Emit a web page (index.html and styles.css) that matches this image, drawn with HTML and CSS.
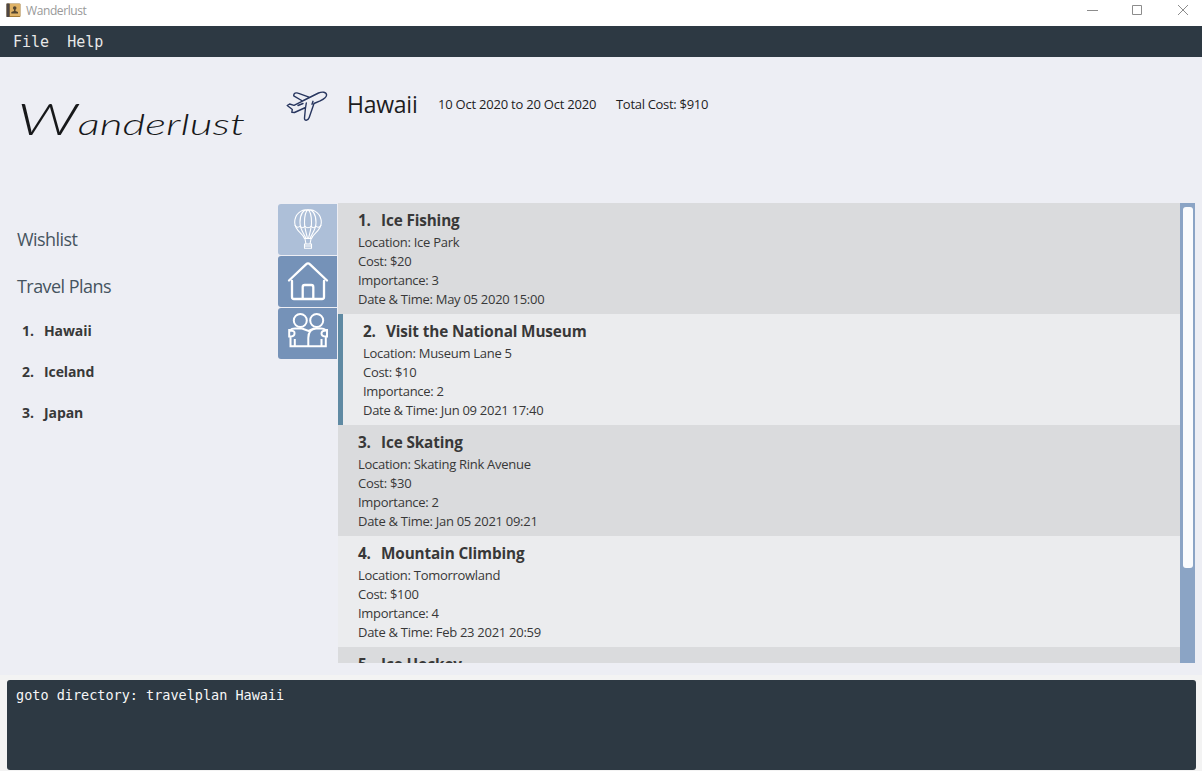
FILE: index.html
```html
<!DOCTYPE html>
<html lang="en">
<head>
<meta charset="utf-8">
<title>Wanderlust</title>
<link rel="stylesheet" href="styles.css">
</head>
<body>
<header class="titlebar">
  <svg class="app-icon" width="15" height="15" viewBox="0 0 15 15">
    <rect x="0.5" y="0.5" width="14" height="13.5" rx="1" fill="#a37a35"/>
    <rect x="4" y="1" width="10" height="12" fill="#dfb265"/>
    <rect x="0.5" y="0.5" width="3" height="13.5" fill="#4d4645"/>
    <circle cx="8.7" cy="5" r="1.8" fill="#54452f"/>
    <path d="M8 6h1.5v2l2.5 1v1.6H5.300V9L8 8z" fill="#54452f"/>
  </svg>
  <span class="app-title">Wanderlust</span>
  <svg class="window-controls" width="104" height="12" viewBox="0 0 104 12" fill="none" stroke="#8c8c8c">
    <path d="M0 6.500h11M45.500 1.500h9v9h-9zM91 1l10 10M101 1L91 11"/>
  </svg>
</header>
<nav class="menubar"><span>File</span><span>Help</span></nav>
<div class="workspace">
  <aside class="sidebar">
    <svg class="wordmark" width="240" height="60" viewBox="0 0 240 60">
      <text class="wordmark-text" x="5" y="43" textLength="228" lengthAdjust="spacingAndGlyphs"><tspan class="initial">W</tspan>anderlust</text>
    </svg>
    <h2 class="side-heading wish">Wishlist</h2>
    <h2 class="side-heading plans">Travel Plans</h2>
    <ol class="plan-list">
      <li><span class="num">1.</span><span>Hawaii</span></li>
      <li><span class="num">2.</span><span>Iceland</span></li>
      <li><span class="num">3.</span><span>Japan</span></li>
    </ol>
  </aside>
  <main class="content">
    <div class="plan-header">
      <svg class="plane" width="42" height="32" viewBox="0 0 42 32" fill="none" stroke="#28365f" stroke-width="1.400" stroke-linejoin="round" stroke-linecap="round">
        <path d="M17.500 9.500L32.500 2C36 .5 40.500 .8 40.600 4C40.500 7 37 8.500 33.500 10.200L28 12.500L23.200 26.500C22 30 18.200 30 18.500 27L19.500 16.500L8.500 21.500L5.800 21.300L6.300 18.500L4.800 17.300L1.200 14.500L3.600 13L8 14.300L17 9.800M16.500 10L7.700 4.800C7.500 2 10 1.400 12 2.200L23 6.200M12 14.500L17 12.500M19.500 17L20.300 12M26 13.300L27 10.300"/>
      </svg>
      <h1 class="plan-name">Hawaii</h1>
      <span class="dates">10 Oct 2020 to 20 Oct 2020</span>
      <span class="total">Total Cost: $910</span>
    </div>
    <div class="board">
      <div class="tabs">
        <div class="tab active">
          <svg width="59" height="51" viewBox="0 0 59 51" fill="none" stroke="#fff" stroke-width="1.100" stroke-linejoin="round">
            <path d="M26.500 34.500C25 29 16.700 27 16.700 18.500C16.700 10 23 5.500 30 5.500S43.300 10 43.300 18.500C43.300 27 35 29 33.500 34.500zM28 34.500C26 29 22 26 22 18.500C22 11 25 6 30 5.500C35 6 38 11 38 18.500C38 26 34 29 32 34.500M29.500 34.500C28 28 26.500 24 26.500 18.500C26.500 12 28 7 30 5.500C32 7 33.500 12 33.500 18.500C33.500 24 32 28 30.500 34.500"/>
            <path d="M16.800 21Q19.500 25 22.200 22Q24.500 25.500 26.800 22Q30 25.500 33.200 22Q35.500 25.500 37.800 22Q40.500 25 43.200 21"/>
            <path d="M27 35L28 40M33 35L32 40M26.500 40h7v4.300h-7zM26.500 42h7"/>
          </svg>
        </div>
        <div class="tab">
          <svg width="59" height="51" viewBox="0 0 59 51" fill="none" stroke="#fff" stroke-width="2.300" stroke-linejoin="round" stroke-linecap="round">
            <path d="M14 25V41Q14 43 16 43H44Q46 43 46 41V25M11 24.500L28 8.300Q30 6.500 32 8.300L49 24.500M24.700 43V31Q24.700 29 26.700 29H33.300Q35.300 29 35.300 31V43"/>
          </svg>
        </div>
        <div class="tab">
          <svg width="59" height="51" viewBox="0 0 59 51" fill="none" stroke="#fff" stroke-width="2" stroke-linejoin="miter">
            <circle cx="22.300" cy="12.500" r="6.500"/><circle cx="38.700" cy="12.500" r="6.500"/>
            <path d="M24 20.500H17Q13.500 20.500 12.500 22H11.200V28.500H12.500V38.200H47.800V28.500H49V22H47.500Q46 20.500 43 20.500H38Q30.500 21 30.300 30V38M24 20.500L30.500 23L36 20.500M12 22.500Q17 22.500 16.500 25.500Q16.500 28.500 12 28.500M48 22.500Q43.500 22.500 43.500 25.500Q43.500 28.500 48 28.500M16.800 31V38M43.500 31V38"/>
          </svg>
        </div>
      </div>
      <div class="activities">
        <article class="card"><h3><span class="num">1.</span>Ice Fishing</h3><p>Location: Ice Park</p><p>Cost: $20</p><p>Importance: 3</p><p>Date &amp; Time: May 05 2020 15:00</p></article>
        <article class="card selected"><h3><span class="num">2.</span>Visit the National Museum</h3><p>Location: Museum Lane 5</p><p>Cost: $10</p><p>Importance: 2</p><p>Date &amp; Time: Jun 09 2021 17:40</p></article>
        <article class="card"><h3><span class="num">3.</span>Ice Skating</h3><p>Location: Skating Rink Avenue</p><p>Cost: $30</p><p>Importance: 2</p><p>Date &amp; Time: Jan 05 2021 09:21</p></article>
        <article class="card"><h3><span class="num">4.</span>Mountain Climbing</h3><p>Location: Tomorrowland</p><p>Cost: $100</p><p>Importance: 4</p><p>Date &amp; Time: Feb 23 2021 20:59</p></article>
        <article class="card"><h3><span class="num">5.</span>Ice Hockey</h3></article>
      </div>
      <div class="scroll-track"><div class="scroll-thumb"></div></div>
    </div>
  </main>
</div>
<footer class="console-area"><div class="console">goto directory: travelplan Hawaii</div></footer>
</body>
</html>
```
FILE: styles.css
```css
* { box-sizing: border-box; }
body {
  margin: 0;
  width: 1202px;
  height: 771px;
  overflow: hidden;
  display: flex;
  flex-direction: column;
  background: #f3f3f3;
  font-family: "Open Sans", "Noto Sans", sans-serif;
  color: #383838;
}
h1, h2, h3, p, ol { margin: 0; padding: 0; font-weight: 400; }
ol { list-style: none; }
.titlebar { height: 26px; flex: none; display: flex; align-items: center; background: #fff; padding: 0 11px 6px 6px; }
.app-title { margin-left: 5px; font-size: 12px; letter-spacing: -0.4px; color: #999; line-height: 18px; padding-top: 2px; }
.window-controls { margin-left: auto; }
.menubar {
  height: 31px; flex: none; display: flex; gap: 18px; padding-left: 13px;
  background: #2d3943; color: #e8e8e8;
  font: 15px/32px "DejaVu Sans Mono", monospace;
}
.workspace { height: 618px; flex: none; display: flex; background: #edeef4; }
.sidebar { width: 278px; flex: none; padding-top: 35px; }
.wordmark { display: block; margin-left: 12px; }
.wordmark-text { font-family: "Lato", sans-serif; font-weight: 300; font-style: italic; font-size: 30px; fill: #17181a; }
.initial { font-size: 44px; }
.side-heading { padding-left: 17px; font-size: 18px; line-height: 27px; color: #46545f; letter-spacing: -0.55px; }
.wish { margin-top: 74px; }
.plans { margin-top: 20px; }
.plan-list { padding: 10px 0 0 22px; }
.plan-list li { display: flex; height: 41px; line-height: 41px; font-size: 14px; font-weight: 700; letter-spacing: -0.1px; }
.plan-list .num { width: 22px; }
.content { flex: 1; }
.plan-header { height: 146px; display: flex; padding: 34px 0 0 8px; color: #1d1d1f; white-space: nowrap; }
.plane { flex: none; }
.plan-name { margin-left: 19px; width: 91px; font-size: 23px; line-height: 27px; letter-spacing: -0.25px; }
.dates, .total { font-size: 13px; line-height: 27px; letter-spacing: -0.3px; }
.dates { width: 178px; letter-spacing: -0.22px; }
.board { display: flex; height: 460px; }
.tabs { width: 60px; flex: none; padding-top: 1px; display: flex; flex-direction: column; gap: 1px; }
.tab { width: 59px; height: 51px; border-radius: 3px 0 0 3px; background: #7592b8; }
.tab.active { background: #adbfd8; }
.tab svg { display: block; }
.activities { width: 842px; height: 460px; overflow: hidden; }
.card { height: 111px; padding: 5px 0 0 20px; background: #ebecee; }
.card:nth-child(odd) { background: #dadbdd; }
.card.selected { border-left: 5px solid #5f8aa3; }
.card h3 { display: flex; margin-bottom: 1px; font-size: 15.3px; font-weight: 700; line-height: 24px; letter-spacing: -0.13px; }
.card .num { width: 23px; }
.card p { font-size: 13px; line-height: 19px; letter-spacing: -0.28px; }
.scroll-track { width: 15px; background: #8ba4c5; padding: 4px 2px 0 3px; }
.scroll-thumb { height: 361px; border-radius: 3px; background: #fafbfd; }
.console-area { flex: 1; padding: 5px 6px 1px 7px; }
.console {
  height: 90px; border-radius: 3px; padding: 5px 9px;
  background: #2d3943; color: #f7f7f7;
  font: 13.5px/21px "DejaVu Sans Mono", monospace;
}
```
